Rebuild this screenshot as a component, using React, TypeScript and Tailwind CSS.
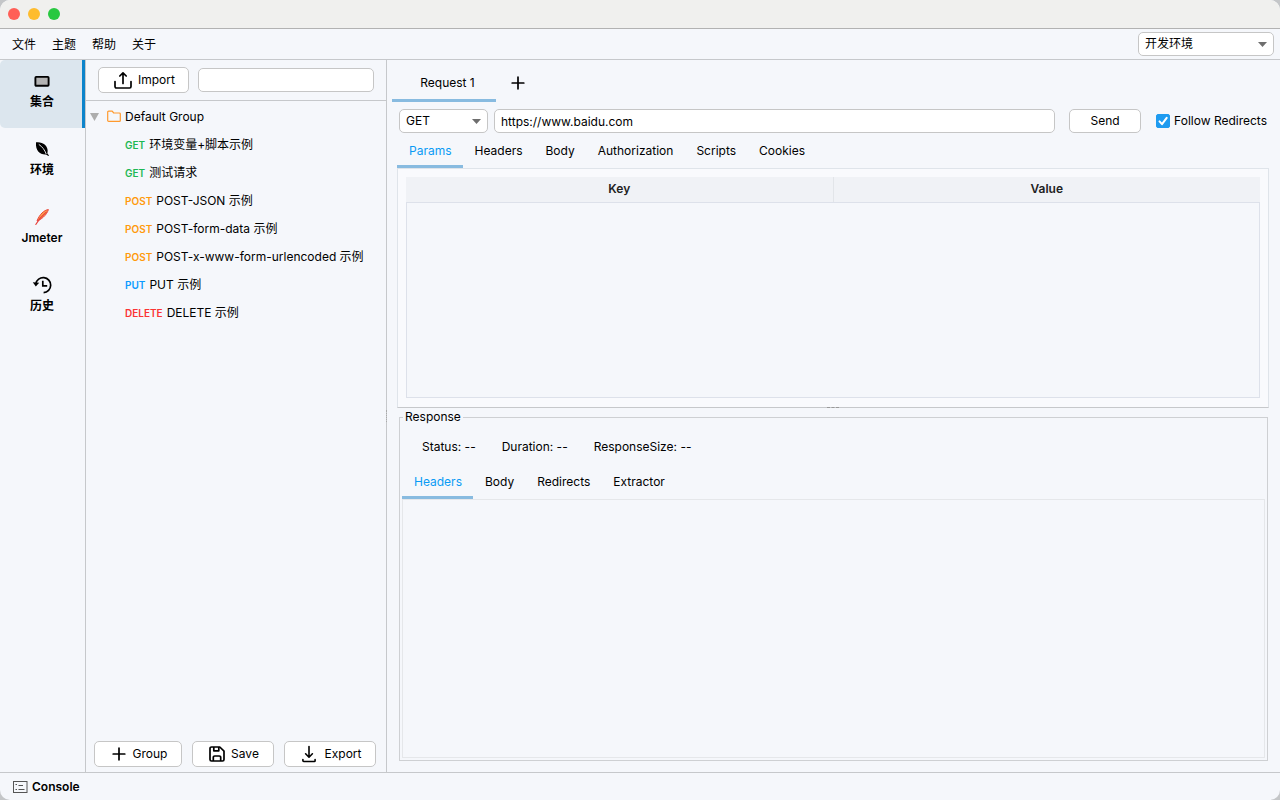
import React, { useState } from 'react';

interface RequestItem {
  method: 'GET' | 'POST' | 'PUT' | 'DELETE';
  name: string;
}

const REQUESTS: RequestItem[] = [
  { method: 'GET', name: '环境变量+脚本示例' },
  { method: 'GET', name: '测试请求' },
  { method: 'POST', name: 'POST-JSON 示例' },
  { method: 'POST', name: 'POST-form-data 示例' },
  { method: 'POST', name: 'POST-x-www-form-urlencoded 示例' },
  { method: 'PUT', name: 'PUT 示例' },
  { method: 'DELETE', name: 'DELETE 示例' },
];

const METHOD_COLORS = {
  GET: 'text-[#1eb854]',
  POST: 'text-[#ff9a0c]',
  PUT: 'text-[#0a9bff]',
  DELETE: 'text-[#fb3434]',
};

const CollectionIcon = () => (
  <svg className="w-5 h-5" viewBox="0 0 20 20">
    <rect x="3.4" y="5.9" width="13.2" height="8.8" rx="0.8" fill="#b3b3b3" stroke="#000" strokeWidth="1.9" />
  </svg>
);

const LeafIcon = () => (
  <svg className="w-5 h-5" viewBox="0 0 20 20">
    <path d="M4 3.200C9 3.200 15 4.800 15.600 11c.1 1.600-.1 2.600-.3 3.200l1.700 2.400-.6.500-2.400-1.700C8 15.800 3.400 12 4 3.200z" fill="#000" />
    <path d="M6.800 5.400c3.400 2.200 6 5.600 7.400 9.600" stroke="#f5f7fb" strokeWidth="0.9" fill="none" />
  </svg>
);

const FeatherIcon = () => (
  <svg className="w-5 h-5" viewBox="0 0 20 20">
    <path d="M16.400 2.600C12.200 3 7.400 7.400 5 14c3.800-1.200 9.600-5.600 11.400-11.400z" fill="#ffa24a" stroke="#e8453f" strokeWidth="1" strokeLinejoin="round" />
    <path d="M14.400 5C10.800 8 6.600 12.400 3.800 17.400" stroke="#e8453f" strokeWidth="1.100" fill="none" strokeLinecap="round" />
  </svg>
);

const HistoryIcon = () => (
  <svg className="w-5 h-5" viewBox="0 0 20 20" fill="none" stroke="#000" strokeWidth="1.700">
    <path d="M3.800 8.800A7.500 7.500 0 1 1 11.600 17.600" />
    <path d="M.800 7.200l3 4.200 3.400-3.600z" fill="#000" stroke="none" />
    <path d="M10.800 5.800v5h4.400" />
  </svg>
);

const ImportIcon = () => (
  <svg className="w-5 h-5" viewBox="0 0 20 20" fill="none" stroke="#000" strokeWidth="1.700" strokeLinecap="round" strokeLinejoin="round">
    <path d="M11 13.500V3M7.800 6L11 2.800l3.200 3.200" />
    <path d="M3 11.500v5.100a1.400 1.400 0 0 0 1.400 1.400h13.200a1.400 1.400 0 0 0 1.400-1.400v-5.100" />
  </svg>
);

const PlusIcon = () => (
  <svg className="w-5 h-5" viewBox="0 0 20 20" fill="none" stroke="#000" strokeWidth="1.700" strokeLinecap="round">
    <path d="M10 4.200v11.600M4.200 10h11.600" />
  </svg>
);

const SaveIcon = () => (
  <svg className="w-5 h-5" viewBox="0 0 20 20" fill="none" stroke="#000" strokeWidth="1.700" strokeLinejoin="round">
    <path d="M4.500 3h8.300L17 7.200v8.300a1.500 1.500 0 0 1-1.500 1.500h-11A1.500 1.500 0 0 1 3 15.500v-11A1.500 1.500 0 0 1 4.500 3z" />
    <path d="M6.300 17v-3.600a1.400 1.400 0 0 1 1.400-1.400h4.600a1.400 1.400 0 0 1 1.400 1.400V17M6.800 3v3.800h5V3" />
  </svg>
);

const ExportIcon = () => (
  <svg className="w-5 h-5" viewBox="0 0 20 20" fill="none" stroke="#000" strokeWidth="1.600" strokeLinecap="round" strokeLinejoin="round">
    <path d="M10 2.500v10.300M6.600 9.800L10 13.200l3.400-3.400" />
    <path d="M3.900 15.500v1.200a.8.8 0 0 0 .8.8h10.600a.8.8 0 0 0 .8-.8v-1.200" />
  </svg>
);

const FolderIcon = () => (
  <svg className="w-[14px] h-[14px]" viewBox="0 0 14 14" fill="none" stroke="#ff9a2e" strokeWidth="1.200" strokeLinejoin="round">
    <path d="M1.600 1.200h3.600l1.500 1.800h5.700a.9.900 0 0 1 .9.900v6.600a.9.900 0 0 1-.9.900H1.600a.9.900 0 0 1-.9-.9V2.100a.9.900 0 0 1 .9-.9z" />
  </svg>
);

const ConsoleIcon = () => (
  <svg className="w-4 h-4" viewBox="0 0 16 16" fill="none" stroke="#555" strokeWidth="1">
    <rect x="1.500" y="2.500" width="13.500" height="11" />
    <path d="M3.500 5.500h1.500M3.500 10.500h1.500M6.500 6.500h4.500M6.500 10.500h6" />
  </svg>
);

const Triangle: React.FC<{ className: string }> = ({ className }) => (
  <svg className={className} viewBox="0 0 10 6" preserveAspectRatio="none" fill="currentColor">
    <path d="M0 0h10L5 6z" />
  </svg>
);

const NAV = [
  { label: '集合', icon: <CollectionIcon /> },
  { label: '环境', icon: <LeafIcon /> },
  { label: 'Jmeter', icon: <FeatherIcon /> },
  { label: '历史', icon: <HistoryIcon /> },
];

interface TabsProps {
  items: string[];
  active: string;
  onChange: (tab: string) => void;
}

const Tabs: React.FC<TabsProps> = ({ items, active, onChange }) => (
  <div role="tablist" className="flex h-[34px] shrink-0">
    {items.map(item => (
      <button
        key={item}
        role="tab"
        aria-selected={item === active}
        onClick={() => onChange(item)}
        className={`pl-3 pr-[11px] pt-[2px] border-b-3 ${item === active ? 'border-[#88bbe0] text-[#0a9bf5]' : 'border-transparent'}`}
      >
        {item}
      </button>
    ))}
  </div>
);

const buttonClass = 'flex items-center justify-center bg-white border border-[#c6c6c6] rounded-[5px]';

const App: React.FC = () => {
  const [nav, setNav] = useState('集合');
  const [search, setSearch] = useState('');
  const [url, setUrl] = useState('https://www.baidu.com');
  const [follow, setFollow] = useState(true);
  const [requestTab, setRequestTab] = useState('Params');
  const [responseTab, setResponseTab] = useState('Headers');

  return (
    <div className="h-screen bg-[#c4c6c8] font-['Inter','Noto_Sans_CJK_SC',sans-serif] text-[12px] leading-4 text-black">
      <div className="h-full flex flex-col bg-[#f5f7fb] rounded-[10px] overflow-hidden">
        <header className="h-[29px] shrink-0 flex items-center gap-2 px-2 bg-[#f0f0ee] border-b border-[#b2b2b2]">
          <span className="w-3 h-3 rounded-full bg-[#ff5f57]" />
          <span className="w-3 h-3 rounded-full bg-[#febc2e]" />
          <span className="w-3 h-3 rounded-full bg-[#28c840]" />
        </header>

        <div className="h-[31px] shrink-0 flex items-center justify-between pl-3 pr-[6px] border-b border-[#c6c8cb]">
          <nav className="flex gap-4 pt-[2px]">
            {['文件', '主题', '帮助', '关于'].map(item => (
              <button key={item}>{item}</button>
            ))}
          </nav>
          <div className="relative">
            <select aria-label="环境" className="appearance-none w-[136px] h-6 px-[6px] bg-white border border-[#c6c6c6] rounded-[5px]">
              <option>开发环境</option>
            </select>
            <Triangle className="absolute right-[7px] top-[10px] w-[9px] h-[5px] text-[#6e6e6e] pointer-events-none" />
          </div>
        </div>

        <div className="flex-1 min-h-0 flex">
          <aside className="w-[86px] shrink-0 border-r border-[#c6c8cb]">
            {NAV.map(item => (
              <button
                key={item.label}
                onClick={() => setNav(item.label)}
                className={`w-full h-[68px] flex flex-col items-center pl-[2px] pt-[11px] gap-[3px] font-semibold border-r-3 ${nav === item.label ? 'bg-[#dce6ee] border-[#0d84cb] rounded-l-[5px]' : 'border-transparent'}`}
              >
                {item.icon}
                {item.label}
              </button>
            ))}
          </aside>

          <section className="relative w-[301px] shrink-0 flex flex-col border-r border-[#c6c8cb]">
            <div className="h-[41px] shrink-0 flex items-center gap-[9px] px-3 border-b border-[#c6c8cb]">
              <button className={`${buttonClass} w-[91px] h-[26px] gap-[6px]`}>
                <ImportIcon />
                Import
              </button>
              <input
                aria-label="Search"
                value={search}
                onChange={(e) => setSearch(e.target.value)}
                className="flex-1 min-w-0 h-6 px-[6px] bg-white border border-[#c6c6c6] rounded-[5px] outline-none"
              />
            </div>

            <div className="flex-1 min-h-0 overflow-hidden pt-[2px]">
              <div className="h-7 flex items-center pl-1">
                <Triangle className="w-[9px] h-2 text-[#adadad]" />
                <span className="ml-2 mr-1"><FolderIcon /></span>
                Default Group
              </div>
              <ul>
                {REQUESTS.map(item => (
                  <li key={item.name} className="h-7 flex items-center gap-1 pl-[39px] whitespace-nowrap">
                    <span className={`text-[10px] font-semibold ${METHOD_COLORS[item.method]}`}>{item.method}</span>
                    <span>{item.name}</span>
                  </li>
                ))}
              </ul>
            </div>

            <div className="shrink-0 flex gap-[10px] pl-2 pb-[5px]">
              <button className={`${buttonClass} w-[88px] h-[26px] gap-1`}>
                <PlusIcon />
                Group
              </button>
              <button className={`${buttonClass} w-[82px] h-[26px] gap-1`}>
                <SaveIcon />
                Save
              </button>
              <button className={`${buttonClass} w-[92px] h-[26px] gap-[6px]`}>
                <ExportIcon />
                Export
              </button>
            </div>
            <span className="absolute -right-px top-1/2 -translate-y-1/2 h-3 border-r border-dotted border-[#aaa]" />
          </section>

          <main className="flex-1 min-w-0 grid grid-rows-[348fr_364fr]">
            <section className="min-h-0 flex flex-col">
              <div className="h-[42px] shrink-0 flex pl-[5px] pt-1">
                <button className="w-[104px] pl-[7px] pt-[2px] border-b-3 border-[#88bbe0]">Request 1</button>
                <button aria-label="New request" className="w-11 flex items-center justify-center">
                  <PlusIcon />
                </button>
              </div>

              <div className="shrink-0 flex items-center gap-[6px] pl-3 pr-[13px] pt-[7px]">
                <div className="relative">
                  <select aria-label="Method" className="appearance-none w-[89px] h-6 px-[6px] bg-white border border-[#c6c6c6] rounded-[5px]">
                    <option>GET</option>
                    <option>POST</option>
                    <option>PUT</option>
                    <option>DELETE</option>
                  </select>
                  <Triangle className="absolute right-[7px] top-[10px] w-[9px] h-[5px] text-[#6e6e6e] pointer-events-none" />
                </div>
                <input
                  aria-label="URL"
                  value={url}
                  onChange={(e) => setUrl(e.target.value)}
                  className="flex-1 min-w-0 h-6 px-[6px] bg-white border border-[#c6c6c6] rounded-[5px] outline-none"
                />
                <button className={`${buttonClass} w-[72px] h-6 ml-2`}>Send</button>
                <label className="relative flex items-center gap-1 ml-[9px] whitespace-nowrap">
                  <input
                    type="checkbox"
                    checked={follow}
                    onChange={(e) => setFollow(e.target.checked)}
                    className="appearance-none w-[14px] h-[14px] rounded-[2px] bg-white border border-[#c6c6c6] checked:bg-[#1e9bf0] checked:border-[#1e9bf0]"
                  />
                  {follow && (
                    <svg className="absolute left-0 w-[14px] h-[14px] pointer-events-none" viewBox="0 0 14 14" fill="none" stroke="#fff" strokeWidth="2" strokeLinecap="round" strokeLinejoin="round">
                      <path d="M3.500 7.400l2.500 2.800 4.700-6.400" />
                    </svg>
                  )}
                  Follow Redirects
                </label>
              </div>

              <div className="flex-1 min-h-0 flex flex-col pl-[10px] pr-[11px] pt-px">
                <Tabs
                  items={['Params', 'Headers', 'Body', 'Authorization', 'Scripts', 'Cookies']}
                  active={requestTab}
                  onChange={setRequestTab}
                />
                <div className="relative flex-1 min-h-0 flex flex-col px-2 pt-2 pb-[9px] bg-[#f9fafd] border border-[#dfe4ea] border-b-[#c6c8cb]">
                  <table className="w-full table-fixed shrink-0 bg-[#f0f2f6]">
                    <thead>
                      <tr className="h-[25px] text-[#222]">
                        <th className="pb-[2px] font-semibold border-r border-[#e2e5e9]">Key</th>
                        <th className="pb-[2px] font-semibold">Value</th>
                      </tr>
                    </thead>
                  </table>
                  <div className="flex-1 bg-[#f5f7fb] border border-[#dde1ea]" />
                  <span className="absolute -bottom-px left-1/2 -translate-x-1/2 w-3 border-b border-dashed border-[#999]" />
                </div>
              </div>
            </section>

            <section className="min-h-0 flex flex-col pl-3 pr-3 pt-px pb-[11px]">
              <fieldset className="flex-1 min-h-0 min-w-0 flex flex-col border border-[#ced0d3] px-[2px] pb-[2px]">
                <legend className="ml-px px-[2px]">Response</legend>
                <div className="shrink-0 flex gap-[26px] pl-5 pt-[14px] pb-[10px]">
                  <span>Status: --</span>
                  <span>Duration: --</span>
                  <span>ResponseSize: --</span>
                </div>
                <Tabs
                  items={['Headers', 'Body', 'Redirects', 'Extractor']}
                  active={responseTab}
                  onChange={setResponseTab}
                />
                <div className="flex-1 border border-[#e5e7ea]" />
              </fieldset>
            </section>
          </main>
        </div>

        <footer className="h-7 shrink-0 flex items-center px-3 border-t border-[#c6c8cb]">
          <button className="flex items-center gap-1 font-semibold">
            <ConsoleIcon />
            Console
          </button>
        </footer>
      </div>
    </div>
  );
};

export default App;
